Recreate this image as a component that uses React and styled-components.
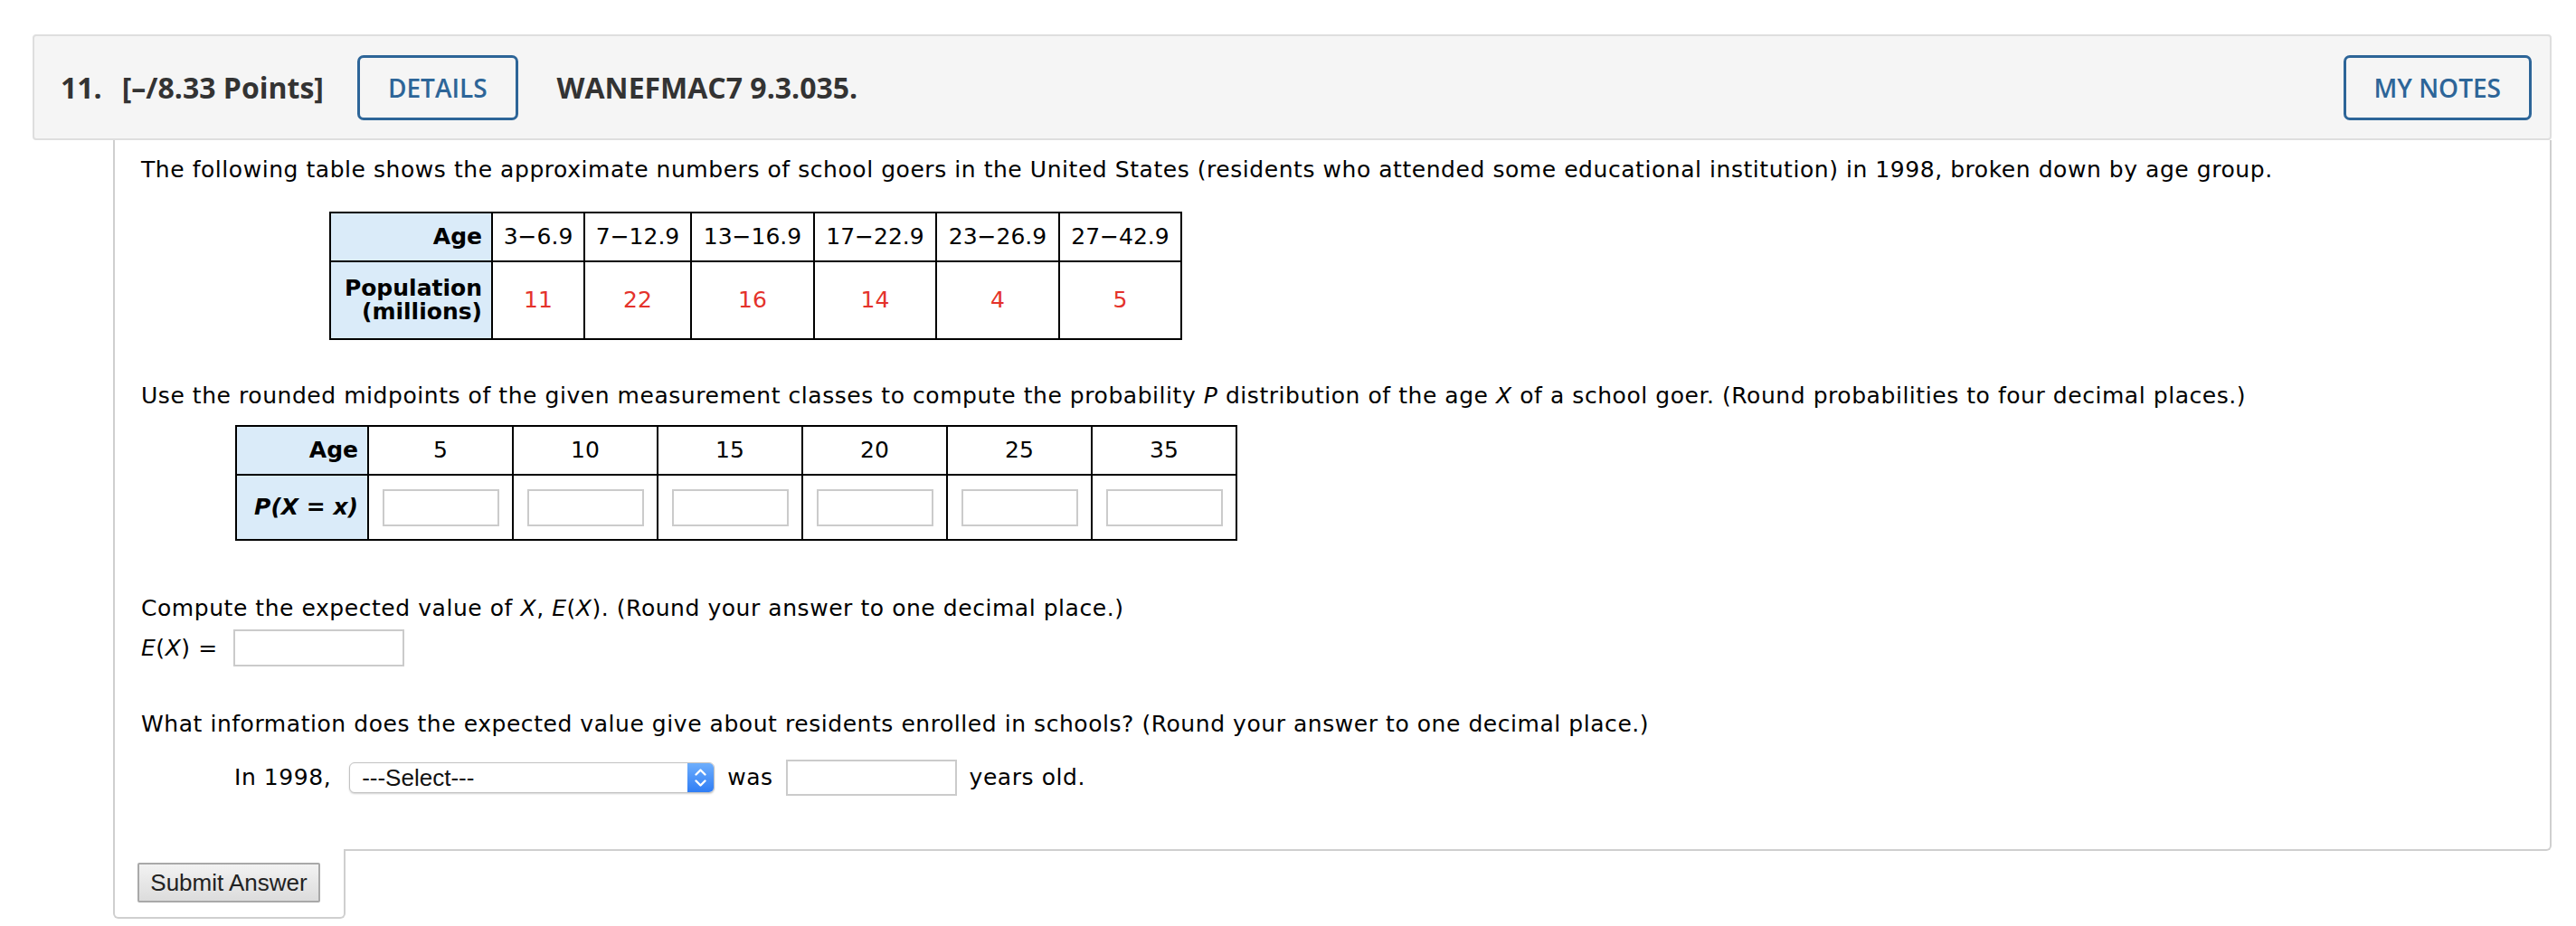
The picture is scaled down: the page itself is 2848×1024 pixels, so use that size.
import React from "react";
import styled, { createGlobalStyle } from "styled-components";

const GlobalStyle = createGlobalStyle`
  body {
    margin: 0;
    background: #fff;
  }
`;

const Page = styled.div`
  padding: 38px 0 0 36px;
  width: 2785px;
  font-family: "DejaVu Sans", Verdana, sans-serif;
  font-size: 25px;
  color: #000;
`;

const Header = styled.div`
  display: flex;
  align-items: center;
  height: 117px;
  box-sizing: border-box;
  background: #f5f5f5;
  border: 2px solid #dedede;
  border-radius: 4px;
  padding: 0 20px 0 29px;
  font-family: "Open Sans", sans-serif;
  color: #333;
`;

const HeadText = styled.span`
  font-size: 32px;
  font-weight: 700;
  margin-right: ${p => p.$mr || 0}px;
`;

const OutlineButton = styled.button`
  height: 72px;
  box-sizing: border-box;
  padding: 0 31px;
  border: 3px solid #2d6598;
  border-radius: 7px;
  background: transparent;
  color: #2d6598;
  font-family: "Open Sans", sans-serif;
  font-size: 28px;
  font-weight: 600;
  margin-right: ${p => p.$mr || 0}px;
  margin-left: ${p => (p.$right ? "auto" : "0")};
`;

const Body = styled.div`
  margin-left: 89px;
  border: 2px solid #cfcfcf;
  border-top: none;
  border-radius: 0 0 6px 0;
  padding: 18px 0 59px 29px;
`;

const Para = styled.p`
  margin: ${p => p.$mt || 0}px 0 0 0;
  line-height: 30px;
  letter-spacing: 0.55px;
`;

const DataTable = styled.table`
  border-collapse: collapse;
  table-layout: fixed;
  width: ${p => p.$w}px;
  margin: ${p => p.$mt}px 0 0 ${p => p.$ml}px;
  border: 2px solid #000;
  line-height: 26px;
`;

const Row = styled.tr`
  height: ${p => p.$h}px;
`;

const HeadCell = styled.th`
  background: #daebf9;
  border: 2px solid #000;
  text-align: right;
  padding: 0 10px 0 6px;
  font-weight: 700;
  font-style: ${p => (p.$italic ? "italic" : "normal")};
  white-space: nowrap;
`;

const Cell = styled.td`
  border: 2px solid #000;
  text-align: center;
  padding: 0;
  color: ${p => (p.$red ? "#e4322b" : "#000")};
  white-space: nowrap;
`;

const TextInput = styled.input`
  box-sizing: border-box;
  width: ${p => p.$w}px;
  height: ${p => p.$h}px;
  border: 2px solid #cbcbcb;
  background: #fff;
  margin: 0;
  padding: 0 6px;
  font-size: 22px;
  vertical-align: middle;
`;

const Line = styled.div`
  display: flex;
  align-items: center;
  margin: ${p => p.$mt}px 0 0 ${p => p.$ml || 0}px;
  gap: ${p => p.$gap}px;
  line-height: 30px;
  letter-spacing: 0.55px;
`;

const Lead = styled.span`
  margin-right: 6px;
`;

const SelectBox = styled.div`
  display: flex;
  align-items: stretch;
  width: 404px;
  height: 34px;
  box-sizing: border-box;
  border: 1px solid #c2c2c2;
  border-radius: 6px;
  background: #fff;
  box-shadow: 0 1px 2px rgba(0, 0, 0, 0.18);
  font-family: "Liberation Sans", Arial, sans-serif;
  font-size: 26px;
  letter-spacing: 0;
  overflow: hidden;
`;

const SelectLabel = styled.span`
  flex: 1;
  display: flex;
  align-items: center;
  padding-left: 13px;
  color: #111;
`;

const SelectArrow = styled.span`
  width: 29px;
  display: flex;
  align-items: center;
  justify-content: center;
  background: linear-gradient(#6eaefc, #2f7df5);
`;

const SubmitBox = styled.div`
  position: relative;
  margin: -2px 0 0 89px;
  width: 257px;
  box-sizing: border-box;
  border: 2px solid #cfcfcf;
  border-top: none;
  border-radius: 0 0 6px 6px;
  background: #fff;
  padding: 15px 0 16px 25px;
`;

const SubmitButton = styled.button`
  width: 202px;
  height: 44px;
  box-sizing: border-box;
  border: 2px solid #a9a9a9;
  border-radius: 2px;
  background: linear-gradient(#f2f2f2, #dcdcdc);
  color: #222;
  font-family: "Liberation Sans", Arial, sans-serif;
  font-size: 26px;
  padding: 0;
`;

const Chevrons = () => (
  <svg width="29" height="32" viewBox="0 0 29 32">
    <polyline points="9.5,12.5 14.5,7.5 19.5,12.5" fill="none" stroke="#fff" strokeWidth="2.4" strokeLinecap="round" strokeLinejoin="round" />
    <polyline points="9.5,19.5 14.5,24.5 19.5,19.5" fill="none" stroke="#fff" strokeWidth="2.4" strokeLinecap="round" strokeLinejoin="round" />
  </svg>
);

const ranges = ["3−6.9", "7−12.9", "13−16.9", "17−22.9", "23−26.9", "27−42.9"];
const pops = ["11", "22", "16", "14", "4", "5"];
const widths1 = [179, 102, 118, 136, 135, 136, 135];
const ages = ["5", "10", "15", "20", "25", "35"];

export default function App() {
  return (
    <Page>
      <GlobalStyle />
      <Header>
        <HeadText $mr={22}>11.</HeadText>
        <HeadText $mr={37}>[–/8.33 Points]</HeadText>
        <OutlineButton $mr={43}>DETAILS</OutlineButton>
        <HeadText>WANEFMAC7 9.3.035.</HeadText>
        <OutlineButton $right>MY NOTES</OutlineButton>
      </Header>
      <Body>
        <Para>
          The following table shows the approximate numbers of school goers in the United States (residents who
          attended some educational institution) in 1998, broken down by age group.
        </Para>
        <DataTable $w={941} $mt={31} $ml={208}>
          <colgroup>
            {widths1.map((w, i) => (
              <col key={i} style={{ width: w }} />
            ))}
          </colgroup>
          <tbody>
            <Row $h={54}>
              <HeadCell>Age</HeadCell>
              {ranges.map(r => (
                <Cell key={r}>{r}</Cell>
              ))}
            </Row>
            <Row $h={86}>
              <HeadCell>
                Population
                <br />
                (millions)
              </HeadCell>
              {pops.map((p, i) => (
                <Cell key={i} $red>
                  {p}
                </Cell>
              ))}
            </Row>
          </tbody>
        </DataTable>
        <Para $mt={47}>
          Use the rounded midpoints of the given measurement classes to compute the probability <i>P</i> distribution
          of the age <i>X</i> of a school goer. (Round probabilities to four decimal places.)
        </Para>
        <DataTable $w={1106} $mt={17} $ml={104}>
          <colgroup>
            <col style={{ width: 146 }} />
            {ages.map(a => (
              <col key={a} style={{ width: 160 }} />
            ))}
          </colgroup>
          <tbody>
            <Row $h={54}>
              <HeadCell>Age</HeadCell>
              {ages.map(a => (
                <Cell key={a}>{a}</Cell>
              ))}
            </Row>
            <Row $h={72}>
              <HeadCell $italic>P(X = x)</HeadCell>
              {ages.map(a => (
                <Cell key={a}>
                  <TextInput $w={129} $h={41} />
                </Cell>
              ))}
            </Row>
          </tbody>
        </DataTable>
        <Para $mt={60}>
          Compute the expected value of <i>X</i>, <i>E</i>(<i>X</i>). (Round your answer to one decimal place.)
        </Para>
        <Line $mt={8} $gap={17}>
          <span>
            <i>E</i>(<i>X</i>) =
          </span>
          <TextInput $w={189} $h={41} />
        </Line>
        <Para $mt={49}>
          What information does the expected value give about residents enrolled in schools? (Round your answer to
          one decimal place.)
        </Para>
        <Line $mt={24} $ml={103} $gap={14}>
          <Lead>In 1998,</Lead>
          <SelectBox>
            <SelectLabel>---Select---</SelectLabel>
            <SelectArrow>
              <Chevrons />
            </SelectArrow>
          </SelectBox>
          <span>was</span>
          <TextInput $w={189} $h={40} />
          <span>years old.</span>
        </Line>
      </Body>
      <SubmitBox>
        <SubmitButton>Submit Answer</SubmitButton>
      </SubmitBox>
    </Page>
  );
}
